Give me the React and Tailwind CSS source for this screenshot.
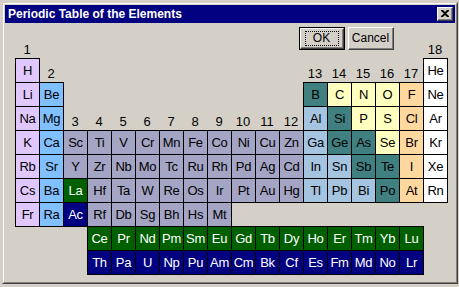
const ALK = "bg-[#e0c8ff] text-black";
const ALE = "bg-[#80c0ff] text-black";
const TRN = "bg-[#a4a4c4] text-black";
const PST = "bg-[#a4c4e0] text-black";
const MTL = "bg-[#408080] text-black";
const NON = "bg-[#ffffc0] text-black";
const HAL = "bg-[#ffd8a0] text-black";
const NOB = "bg-white text-black";
const LAN = "bg-[#006000] text-white";
const ACT = "bg-[#000080] text-white";

// colour class per symbol; anything not listed is a transition metal
const cat = {
  H: ALK, Li: ALK, Na: ALK, K: ALK, Rb: ALK, Cs: ALK, Fr: ALK,
  Be: ALE, Mg: ALE, Ca: ALE, Sr: ALE, Ba: ALE, Ra: ALE,
  Al: PST, Ga: PST, In: PST, Sn: PST, Tl: PST, Pb: PST, Bi: PST,
  B: MTL, Si: MTL, Ge: MTL, As: MTL, Sb: MTL, Te: MTL, Po: MTL,
  C: NON, N: NON, O: NON, P: NON, S: NON, Se: NON,
  F: HAL, Cl: HAL, Br: HAL, I: HAL, At: HAL,
  He: NOB, Ne: NOB, Ar: NOB, Kr: NOB, Xe: NOB, Rn: NOB,
  La: LAN, Ac: ACT,
};

const periods = [
  [[1, "H"], [18, "He"]],
  [[1, "Li"], [2, "Be"], [13, "B"], [14, "C"], [15, "N"], [16, "O"], [17, "F"], [18, "Ne"]],
  [[1, "Na"], [2, "Mg"], [13, "Al"], [14, "Si"], [15, "P"], [16, "S"], [17, "Cl"], [18, "Ar"]],
  "K Ca Sc Ti V Cr Mn Fe Co Ni Cu Zn Ga Ge As Se Br Kr".split(" ").map((s, i) => [i + 1, s]),
  "Rb Sr Y Zr Nb Mo Tc Ru Rh Pd Ag Cd In Sn Sb Te I Xe".split(" ").map((s, i) => [i + 1, s]),
  "Cs Ba La Hf Ta W Re Os Ir Pt Au Hg Tl Pb Bi Po At Rn".split(" ").map((s, i) => [i + 1, s]),
  "Fr Ra Ac Rf Db Sg Bh Hs Mt".split(" ").map((s, i) => [i + 1, s]),
];

const lanth = "Ce Pr Nd Pm Sm Eu Gd Tb Dy Ho Er Tm Yb Lu".split(" ");
const actin = "Th Pa U Np Pu Am Cm Bk Cf Es Fm Md No Lr".split(" ");

const cells = [];
periods.forEach((row, p) => {
  row.forEach(([col, sym]) => cells.push({ sym, col, row: p + 3, cls: cat[sym] || TRN }));
});
lanth.forEach((sym, i) => cells.push({ sym, col: i + 4, row: 10, cls: LAN }));
actin.forEach((sym, i) => cells.push({ sym, col: i + 4, row: 11, cls: ACT }));

// group number labels sit in the cell above the first element
const labels = [];
for (let g = 1; g <= 18; g++) {
  let row = 5;
  if (g === 1 || g === 18) row = 2;
  else if (g === 2 || (g >= 13 && g <= 17)) row = 3;
  labels.push({ g, row });
}

function WinButton({ children, isDefault }) {
  const bevel = (
    <div className="flex-1 flex border-t border-l border-t-white border-l-white border-r border-b border-r-[#404040] border-b-[#404040]">
      <div className="flex-1 flex items-center justify-center border-r border-b border-r-[#808080] border-b-[#808080]">
        {isDefault ? (
          <span className="flex items-center justify-center w-[34px] h-[15px] border border-dotted border-black">
            {children}
          </span>
        ) : (
          children
        )}
      </div>
    </div>
  );
  return (
    <button className={`w-[46px] h-[23px] flex bg-[#d4d0c8] text-[12px] text-black leading-none ${isDefault ? "border border-black" : ""}`}>
      {bevel}
    </button>
  );
}

export default function App() {
  return (
    <div
      className="w-[459px] h-[287px] bg-[#d4d0c8] pt-[2px] pl-[2px] overflow-hidden"
      style={{ fontFamily: '"Liberation Sans", Arial, sans-serif' }}
    >
      <div className="w-[456px] h-[282px] flex border-t border-l border-t-[#d4d0c8] border-l-[#d4d0c8] border-r border-b border-r-[#404040] border-b-[#404040]">
        <div className="flex-1 flex flex-col p-[1px] border-t border-l border-t-white border-l-white border-r border-b border-r-[#808080] border-b-[#808080]">
          <div className="h-[18px] bg-[#000080] flex items-center justify-between pl-[3px] pr-[2px]">
            <span className="text-white font-bold text-[12px] leading-none">
              Periodic Table of the Elements
            </span>
            <button className="w-[16px] h-[14px] flex bg-[#d4d0c8] border-t border-l border-t-white border-l-white border-r border-b border-r-[#404040] border-b-[#404040]">
              <span className="flex-1 flex items-center justify-center border-r border-b border-r-[#808080] border-b-[#808080]">
                <svg width="8" height="7" viewBox="0 0 8 7">
                  <path d="M0 0h2l2 2 2-2h2v1L5 3.5 8 6v1H6L4 5 2 7H0V6l3-2.5L0 1z" fill="#000" />
                </svg>
              </span>
            </button>
          </div>

          <div className="pt-[4px] pl-[10px]">
            <div className="grid grid-cols-[repeat(18,24px)] grid-rows-[7px_repeat(10,24px)] text-[12px]">
              <div className="flex gap-[3px] pl-[20px]" style={{ gridColumn: "12 / span 5", gridRow: "1 / span 2" }}>
                <WinButton isDefault>OK</WinButton>
                <WinButton>Cancel</WinButton>
              </div>
              {labels.map(({ g, row }) => (
                <div
                  key={"g" + g}
                  className="flex items-end justify-center pb-[2px] text-black text-[13px] leading-none"
                  style={{ gridColumn: g, gridRow: row }}
                >
                  {g}
                </div>
              ))}
              {cells.map(({ sym, col, row, cls }) => (
                <div
                  key={sym}
                  className={`w-[25px] h-[25px] border border-black flex items-center justify-center text-[13px] tracking-[-0.3px] leading-none ${cls}`}
                  style={{ gridColumn: col, gridRow: row }}
                >
                  {sym}
                </div>
              ))}
            </div>
          </div>
        </div>
      </div>
    </div>
  );
}
